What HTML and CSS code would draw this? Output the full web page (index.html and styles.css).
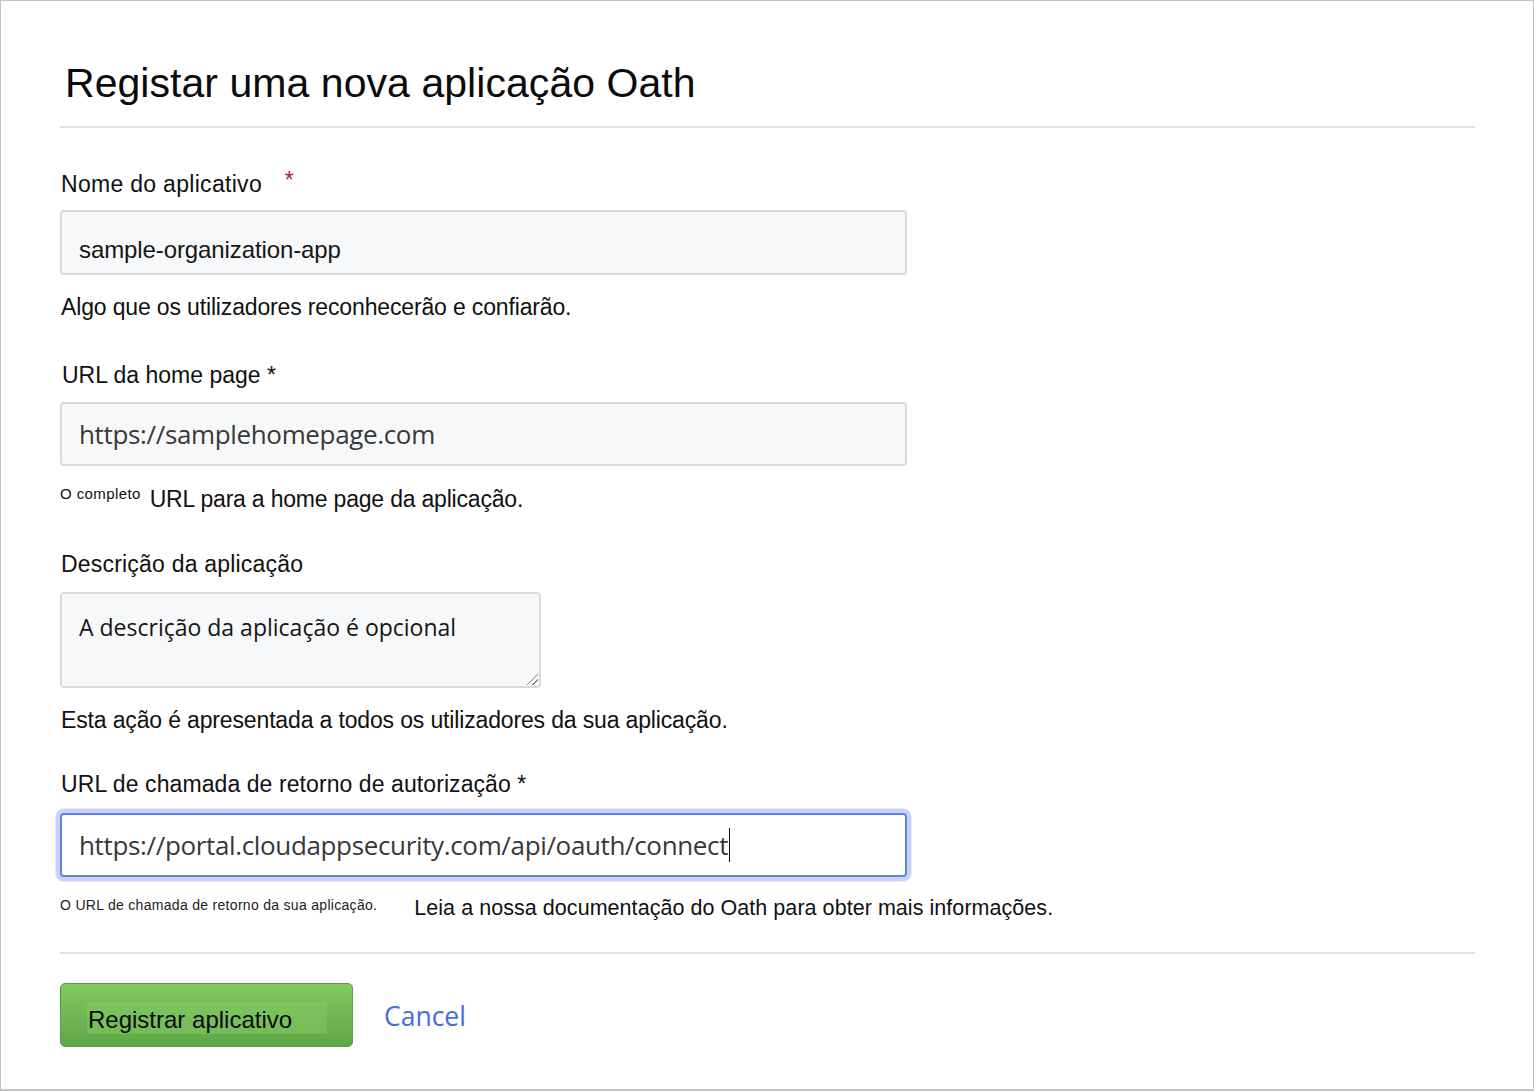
FILE: index.html
```html
<!DOCTYPE html>
<html lang="pt">
<head>
<meta charset="utf-8">
<title>Registar uma nova aplicação Oath</title>
<link rel="stylesheet" href="styles.css">
</head>
<body>
<div class="frame">
  <h1 class="title">Registar uma nova aplicação Oath</h1>
  <hr class="rule">
  <form class="form">
    <div class="field f-name">
      <label class="label label-name">Nome do aplicativo <span class="req">*</span></label>
      <div class="input input-arial">sample-organization-app</div>
      <p class="hint h-name">Algo que os utilizadores reconhecerão e confiarão.</p>
    </div>
    <div class="field f-home">
      <label class="label label-alt">URL da home page *</label>
      <div class="input input-url">https://samplehomepage.com</div>
      <p class="hint hint-mixed"><span class="small">O completo</span><span class="mid">URL para a home page da aplicação.</span></p>
    </div>
    <div class="field f-desc">
      <label class="label">Descrição da aplicação</label>
      <div class="textarea">A descrição da aplicação é opcional<span class="grip"></span></div>
      <p class="hint h-desc">Esta ação é apresentada a todos os utilizadores da sua aplicação.</p>
    </div>
    <div class="field f-cb">
      <label class="label label-cb">URL de chamada de retorno de autorização *</label>
      <div class="input input-url input-focus">https://portal.cloudappsecurity.com/api/oauth/connect<span class="caret"></span></div>
      <p class="hint hint-split"><span class="tiny">O URL de chamada de retorno da sua aplicação.</span><span class="doc">Leia a nossa documentação do Oath para obter mais informações.</span></p>
    </div>
  </form>
  <hr class="rule rule-bottom">
  <div class="actions">
    <button class="btn" type="button"><span class="btn-label">Registrar aplicativo</span></button>
    <a class="cancel" href="#">Cancel</a>
  </div>
</div>
</body>
</html>
```
FILE: styles.css
```css
* { box-sizing: border-box; }
html, body { margin: 0; padding: 0; background: #ffffff; }
body { font-family: "Liberation Sans", Arial, sans-serif; color: #111; }

.frame {
  width: 1534px;
  height: 1091px;
  border: 1px solid #c4c4c4;
  border-bottom-width: 2px;
  padding: 0 58px 0 59px;
}

.title {
  margin: 58px 0 0 5px;
  font-size: 41px;
  font-weight: 400;
  line-height: 48px;
  color: #0b0b0b;
  letter-spacing: 0.05px;
}

.rule {
  margin: 19px 0 0 0;
  border: 0;
  height: 2px;
  background: #e2e1e8;
}

.form { display: flex; flex-direction: column; }

.field { display: flex; flex-direction: column; }
.f-name { margin-top: 43px; }
.f-home { margin-top: 42px; }
.f-desc { margin-top: 39px; }
.f-cb { margin-top: 38px; }

.label {
  font-size: 23px;
  line-height: 26px;
  height: 26px;
  color: #111;
  margin-left: 1px;
  letter-spacing: 0.2px;
}
.label-name { letter-spacing: 0.3px; }
.label-alt { margin-left: 2px; letter-spacing: 0; }
.label-cb { letter-spacing: 0.08px; }
.req { color: #a7232b; margin-left: 16px; position: relative; top: -4px; }

.input {
  margin-top: 13px;
  width: 847px;
  height: 65px;
  background: #f7f8fa;
  border: 2px solid #d9dade;
  border-radius: 4px;
  padding: 0 0 0 17px;
  display: flex;
  align-items: center;
  color: #151515;
}
.input-arial {
  font-family: "Liberation Sans", Arial, sans-serif;
  font-size: 24px;
  letter-spacing: -0.1px;
  padding-top: 14px;
}
.input-url {
  font-family: "Open Sans", "Noto Sans", sans-serif;
  font-size: 26px;
  color: #383838;
  letter-spacing: -0.35px;
}
.f-home .input { margin-top: 14px; height: 64px; }

.textarea {
  position: relative;
  margin-top: 15px;
  width: 481px;
  height: 96px;
  background: #f7f8fa;
  border: 2px solid #d9dade;
  border-radius: 4px;
  padding: 18px 0 0 17px;
  font-family: "Open Sans", "Noto Sans", sans-serif;
  font-size: 23px;
  line-height: 30px;
  color: #151515;
}
.grip {
  position: absolute;
  right: 1px;
  bottom: 1px;
  width: 14px;
  height: 14px;
  background:
    linear-gradient(135deg, transparent 0 58%, #8a8a8a 58% 64%, transparent 64% 78%, #8a8a8a 78% 84%, transparent 84%);
}

.hint {
  margin: 0 0 0 1px;
  font-size: 23px;
  line-height: 26px;
  height: 26px;
  color: #111;
  letter-spacing: -0.15px;
}
.h-name { margin-top: 19px; }
.h-desc { margin-top: 19px; }

.hint-mixed { display: flex; align-items: flex-start; margin-top: 20px; margin-left: 0; }
.hint-mixed .small { font-size: 15px; line-height: 16px; letter-spacing: 0.4px; }
.hint-mixed .mid { margin-left: 9px; letter-spacing: -0.2px; }

.input-focus {
  margin-top: 16px;
  height: 64px;
  border: 2px solid #5b86e6;
  background: #ffffff;
  border-radius: 4px;
  box-shadow: 0 0 0 4px #c6d3f3, 0 0 0 5px #e4eaf9;
}
.caret {
  display: inline-block;
  width: 1px;
  height: 34px;
  background: #111;
  margin-left: 1px;
}

.hint-split { display: flex; align-items: flex-start; margin-top: 18px; margin-left: 0; }
.hint-split .tiny { font-size: 14px; line-height: 20.5px; letter-spacing: 0.3px; color: #222; }
.hint-split .doc { margin-left: 37px; font-size: 21.5px; letter-spacing: 0.05px; color: #111; }

.rule-bottom { margin-top: 31px; }

.actions {
  margin-top: 29px;
  display: flex;
  align-items: center;
  gap: 31px;
}
.btn {
  width: 293px;
  height: 64px;
  border: 1px solid #5b9a45;
  border-radius: 5px;
  background: linear-gradient(#80ca60, #5fa647);
  padding: 0 0 0 26px;
  display: flex;
  align-items: center;
  cursor: pointer;
}
.btn-label {
  display: block;
  width: 240px;
  margin-top: 6px;
  text-align: left;
  padding: 4px 0 0 1px;
  background: rgba(130, 200, 100, 0.55);
  font-family: "Liberation Sans", Arial, sans-serif;
  font-size: 24px;
  color: #0a0a0a;
}
.cancel {
  font-family: "Open Sans", "Noto Sans", sans-serif;
  font-size: 26.5px;
  color: #4a6cd8;
  text-decoration: none;
  position: relative;
  top: 1px;
}
```
